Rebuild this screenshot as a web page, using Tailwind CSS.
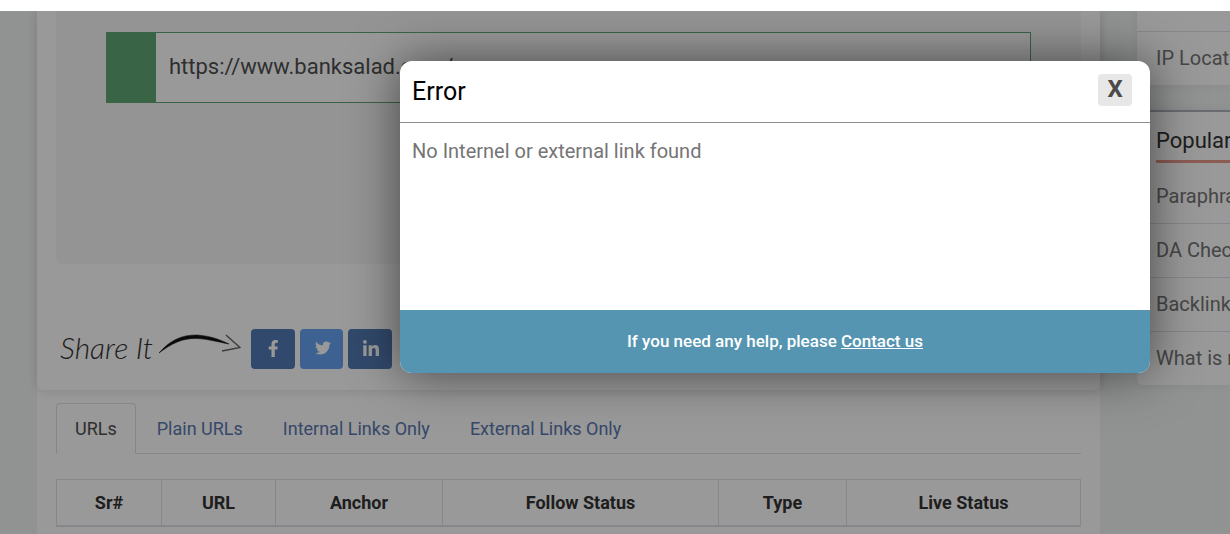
<!DOCTYPE html>
<html lang="en">
<head>
  <meta charset="UTF-8">
  <meta name="viewport" content="width=device-width, initial-scale=1.0">
  <title>Link Analyzer</title>
  <script src="https://cdn.jsdelivr.net/npm/@tailwindcss/browser@4"></script>
</head>
<body class="bg-white pt-[11px] h-screen overflow-hidden font-[Roboto,sans-serif]">
  <div class="relative h-full overflow-hidden bg-[#f1f6f4]">

    <div class="flex h-full gap-[37px] pl-[37px]">
      <main class="flex-1 min-w-0 bg-white">
        <section class="relative bg-white rounded-b-md px-[19px] pb-[21px] shadow-[0_0_12px_rgba(0,0,0,0.15)]">
          <div class="bg-[#f7f7f7] rounded-b-md h-[253px] px-[50px] pt-[21px]">
            <div class="flex h-[71px] border border-[#62a776] bg-white">
              <div class="w-[49px] bg-[#62a776]"></div>
              <input type="text" aria-label="Website URL" value="https://www.banksalad.com/" class="flex-1 min-w-0 px-[13px] pb-[2px] text-[22px] text-[#4f4f4f] outline-none">
            </div>
          </div>
          <div class="flex items-center mt-[65px]">
            <span class="w-[103px] pl-1 pb-1 text-[30px] leading-9 italic font-light font-[Lato,sans-serif] text-[#333] whitespace-nowrap">Share It</span>
            <svg class="w-[82px] h-6 mb-2 mr-[10px]" viewBox="0 0 82 24" fill="none" aria-hidden="true">
              <path d="M0 20C12 6 24 2 38 2C51 3 60 6 70 11C58 9 50 6 38 5.500C24 5 13 10 0 20Z" fill="#111" stroke="#111" stroke-width=".5"/>
              <path d="M67 2L81 14.500L63 18" stroke="#666" stroke-width="1.500"/>
            </svg>
            <div class="flex gap-[5px]">
              <button aria-label="Facebook" class="w-11 h-10 rounded bg-[#507bb4] flex items-center justify-center">
                <svg class="h-[17px] mb-[2px]" viewBox="0 0 320 512" fill="#fff"><path d="M279.14 288l14.22-92.66h-88.91v-60.13c0-25.35 12.42-50.06 52.24-50.06h40.42V6.26S260.43 0 225.36 0c-73.22 0-121.08 44.38-121.08 124.72v70.62H22.89V288h81.39v224h100.17V288z"/></svg>
              </button>
              <button aria-label="Twitter" class="w-[43px] h-10 rounded bg-[#67a3f3] flex items-center justify-center">
                <svg class="w-4 h-4 ml-[2px] mb-[2px]" viewBox="0 0 512 512" fill="#fff"><path d="M459.37 151.716c.325 4.548.325 9.097.325 13.645 0 138.72-105.583 298.558-298.558 298.558-59.452 0-114.68-17.219-161.137-47.106 8.447.974 16.568 1.299 25.34 1.299 49.055 0 94.213-16.568 130.274-44.832-46.132-.975-84.792-31.188-98.112-72.772 6.498.974 12.995 1.624 19.818 1.624 9.421 0 18.843-1.3 27.614-3.573-48.081-9.747-84.143-51.98-84.143-102.985v-1.299c13.969 7.797 30.214 12.67 47.431 13.319-28.264-18.843-46.781-51.005-46.781-87.391 0-19.492 5.197-37.36 14.294-52.954 51.655 63.675 129.3 105.258 216.365 109.807-1.624-7.797-2.599-15.918-2.599-24.04 0-57.828 46.782-104.934 104.934-104.934 30.213 0 57.502 12.67 76.67 33.137 23.715-4.548 46.456-13.32 66.599-25.34-7.798 24.366-24.366 44.833-46.132 57.827 21.117-2.273 41.584-8.122 60.426-16.243-14.292 20.791-32.161 39.308-52.628 54.253z"/></svg>
              </button>
              <button aria-label="LinkedIn" class="w-11 h-10 rounded bg-[#537ab2] flex items-center justify-center">
                <svg class="w-4 h-4 ml-[2px] mb-[2px]" viewBox="0 0 448 448" fill="#fff"><path d="M100.28 448H7.4V148.9h92.88zM53.79 108.1C24.09 108.1 0 83.5 0 53.8a53.79 53.79 0 0 1 107.58 0c0 29.7-24.1 54.3-53.79 54.3zM447.9 448h-92.68V302.4c0-34.7-.7-79.2-48.29-79.2-48.29 0-55.69 37.7-55.69 76.7V448h-92.78V148.9h89.08v40.8h1.3c12.4-23.5 42.69-48.3 88.08-48.3 94.2 0 111.28 62 111.28 142.3V448z"/></svg>
              </button>
            </div>
          </div>
        </section>

        <section class="px-[19px] pt-[13px]">
          <nav class="flex border-b border-[#dee2e6] text-[18px] leading-[49px] text-[#5a78b0]">
            <a href="#urls" class="-mb-px mr-px px-[18px] rounded-t border border-b-white border-[#dee2e6] bg-white text-[#4f4f4f]">URLs</a>
            <a href="#plain" class="-mb-px px-[19px] border border-transparent">Plain URLs</a>
            <a href="#internal" class="-mb-px px-[19px] border border-transparent">Internal Links Only</a>
            <a href="#external" class="-mb-px px-[19px] border border-transparent">External Links Only</a>
          </nav>
          <table class="mt-[25px] w-full table-fixed border-collapse text-[18px] text-[#333]">
            <thead>
              <tr class="h-[46px]">
                <th class="w-[105px] border border-b-2 border-[#dee2e6]">Sr#</th>
                <th class="w-[114px] border border-b-2 border-[#dee2e6]">URL</th>
                <th class="w-[167px] border border-b-2 border-[#dee2e6]">Anchor</th>
                <th class="w-[276px] border border-b-2 border-[#dee2e6]">Follow Status</th>
                <th class="w-[128px] border border-b-2 border-[#dee2e6]">Type</th>
                <th class="border border-b-2 border-[#dee2e6]">Live Status</th>
              </tr>
            </thead>
          </table>
        </section>
      </main>

      <aside class="w-[93px] shrink-0 whitespace-nowrap text-[20px] leading-[53px] text-[#757575]">
        <div class="bg-white pt-5 shadow-[0_0_12px_rgba(0,0,0,0.08)]">
          <a href="#ip" class="block overflow-hidden border-t border-[#dee2e6] pl-[19px]">IP Location</a>
        </div>
        <div class="mt-[25px] rounded-bl-md border-t-2 border-[#adb5bd] bg-white shadow-[0_0_12px_rgba(0,0,0,0.08)]">
          <h2 class="ml-[19px] mb-[7px] overflow-hidden border-b-[3px] border-[#e9998a] pt-[10px] text-[22px] leading-[38px] text-[#333]">Popular Tools</h2>
          <a href="#paraphrase" class="block overflow-hidden border-b border-[#dee2e6] pl-[19px]">Paraphrasing Tool</a>
          <a href="#da" class="block overflow-hidden border-b border-[#dee2e6] pl-[19px]">DA Checker</a>
          <a href="#backlink" class="block overflow-hidden border-b border-[#dee2e6] pl-[19px]">Backlink Checker</a>
          <a href="#my-ip" class="block overflow-hidden pl-[19px]">What is my IP</a>
        </div>
      </aside>
    </div>

    <!-- modal -->
    <div class="absolute inset-0 bg-black/40 pt-[50px] pl-[400px]">
      <div role="dialog" aria-labelledby="modalTitle" class="w-[750px] overflow-hidden rounded-xl bg-white shadow-[0_0_50px_rgba(0,0,0,0.55)]">
        <div class="flex items-center justify-between border-b border-[#8e8e8e] h-[62px] pl-3 pr-[18px]">
          <h1 id="modalTitle" class="text-[25px] text-black">Error</h1>
          <button class="mb-1 w-[34px] h-8 rounded bg-[#e7e7e7] pb-[2px] text-[24px] leading-[30px] font-bold text-[#4a4a4a]">X</button>
        </div>
        <p class="h-[187px] px-3 pt-[14px] text-[20px] leading-7 text-[#757575]">No Internel or external link found</p>
        <div class="bg-[#5595b1] text-center text-[17px] leading-[63px] font-medium text-white">
          If you need any help, please <a href="#contact" class="underline">Contact us</a>
        </div>
      </div>
    </div>
  </div>
</body>
</html>
